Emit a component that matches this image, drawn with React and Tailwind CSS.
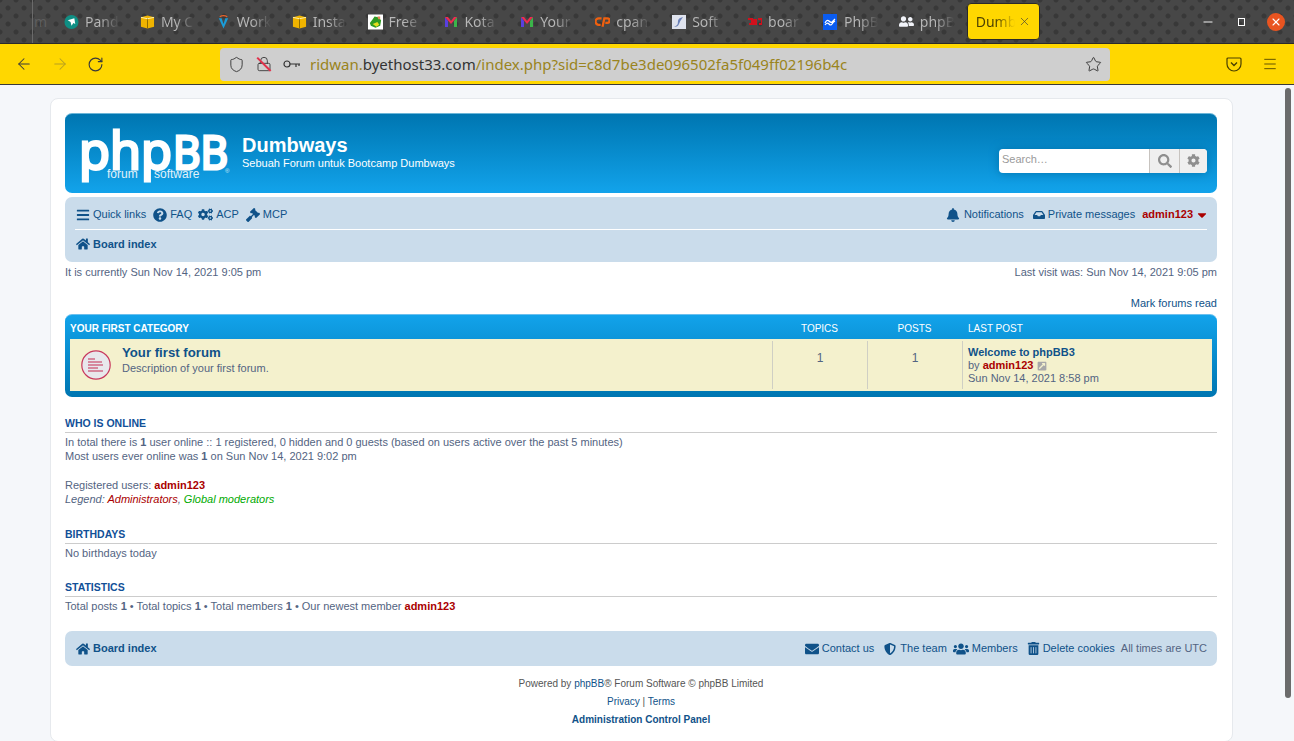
import React from "react";
import {
  FaBars, FaQuestionCircle, FaCogs, FaGavel, FaBell, FaInbox, FaHome, FaEnvelope,
  FaShieldAlt, FaUsers, FaUserFriends, FaTrashAlt, FaSearch, FaCog, FaExternalLinkSquareAlt, FaCaretDown,
} from "react-icons/fa";
import { ArrowLeft, ArrowRight, RotateCw, Star, Menu, Shield, Lock, X, Minus } from "lucide-react";

const Box = () => (
  <svg width="16" height="16" viewBox="0 0 16 16">
    <path d="M1 3l7-2 7 2v10l-7 2-7-2z" fill="#f0b400" />
    <path d="M8 4v11" stroke="#8a6a00" strokeWidth="1" />
    <path d="M1 3l7 1.5L15 3" stroke="#fff2b0" strokeWidth="1" fill="none" />
  </svg>
);

const GMail = () => (
  <svg width="14" height="14" viewBox="0 0 14 14">
    <path d="M1 2v10h3V6z" fill="#5a3fe0" />
    <path d="M13 2v10h-3V6z" fill="#3bb54a" />
    <path d="M1 2l3 0 3 4 3-4 3 0-6 7z" fill="#ee2c50" />
  </svg>
);

const tabs = [
  {
    label: "Pand",
    icon: (
      <svg width="16" height="16" viewBox="0 0 16 16">
        <circle cx="8" cy="8" r="7.5" fill="#0f8f84" />
        <path d="M4 6l7-2 1 6-2-1-2 3-1-4z" fill="#fff" />
      </svg>
    ),
  },
  { label: "My C", icon: <Box /> },
  {
    label: "Work",
    icon: (
      <svg width="16" height="16" viewBox="0 0 16 16">
        <path d="M3 4l5 11 5-11h-3l-2 6-2-6z" fill="#1a9cd8" />
        <path d="M4 2.5q4-2.5 8 0" stroke="#e8642c" strokeWidth="1.2" fill="none" />
      </svg>
    ),
  },
  { label: "Insta", icon: <Box /> },
  {
    label: "Free",
    icon: (
      <svg width="16" height="16" viewBox="0 0 16 16">
        <rect width="16" height="16" fill="#fff" />
        <path d="M2 9l3-4 2-3 4 1 3 3-1 6-5 2-5-2z" fill="#2f9a24" />
        <path d="M5 10l5-2 2 3-3 2z" fill="#e6dc1e" />
        <path d="M10 2h3v3h-2z" fill="#e88a5a" />
      </svg>
    ),
  },
  { label: "Kota", icon: <GMail /> },
  { label: "Your", icon: <GMail /> },
  {
    label: "cpan",
    icon: (
      <svg width="16" height="14" viewBox="0 0 16 14">
        <path d="M7 3H4a3 3 0 000 7h2M8 12l2-9h3a2.5 2.5 0 010 5h-2" stroke="#f0600f" strokeWidth="2.4" fill="none" />
      </svg>
    ),
  },
  {
    label: "Soft",
    icon: (
      <svg width="14" height="14" viewBox="0 0 14 14">
        <rect width="14" height="14" fill="#dfe3ee" />
        <path d="M11 2Q6 3 6 6t-1 4-3 2q4 0 5-3t4-7z" fill="#6a80b8" />
      </svg>
    ),
  },
  {
    label: "boar",
    icon: (
      <svg width="14" height="8" viewBox="0 0 14 8">
        <path d="M0 1h4v5H1M6 1v5h2V1M10 1h4v5h-3" stroke="#d0101c" strokeWidth="2" fill="none" />
      </svg>
    ),
  },
  {
    label: "PhpB",
    icon: (
      <svg width="14" height="16" viewBox="0 0 14 16">
        <rect width="14" height="16" fill="#0a5cf0" />
        <path d="M2 9q2-4 4-2t3 1 3-3M2 11q2-3 4-1t3 0 3-3" stroke="#fff" strokeWidth="1.2" fill="none" />
      </svg>
    ),
  },
  { label: "phpB", icon: <FaUserFriends className="text-[#f2f4fa] text-[15px]" /> },
];

const BrowserChrome = () => (
  <div className="h-[85px] shrink-0 font-['Noto_Sans',sans-serif]">
    <div className="h-[44px] flex items-center bg-[#474747] bg-[radial-gradient(circle,#383838_2px,transparent_3px),radial-gradient(circle,#383838_2px,transparent_3px)] bg-[length:16px_16px] bg-[position:0_0,8px_8px] border-b border-[#2a2a2a]">
      <div className="w-[33px] h-full border-r border-[#6a6a6a]"></div>
      <div className="w-[31px] pl-[1px] flex items-center text-[14px] text-[#5e5e5e]">m</div>
      {tabs.map((tab) => (
        <div key={tab.label} className="w-[75.9px] flex items-center gap-[6px] shrink-0">
          <span className="w-[15px] flex justify-center shrink-0">{tab.icon}</span>
          <span className="w-[38px] overflow-hidden text-[14px] leading-none py-[2px] whitespace-nowrap bg-gradient-to-r from-[#b8b8b8] from-40% to-transparent to-90% bg-clip-text text-transparent">
            {tab.label}
          </span>
        </div>
      ))}
      <div className="w-[73px] h-[37px] ml-[-8px] bg-[#ffd700] rounded-[4px] border border-[#2a2a2a] flex items-center pl-[8px] gap-[1px] shrink-0">
        <span className="w-[39px] text-[14px] leading-none py-[2px] whitespace-nowrap bg-gradient-to-r from-[#4a3f00] from-50% to-transparent bg-clip-text text-transparent">
          Dumb
        </span>
        <X size={13} strokeWidth={1.2} className="text-[#3a3a3a] ml-[2px]" />
      </div>
      <div className="flex-1"></div>
      <div className="flex items-center">
        <Minus size={14} strokeWidth={1.6} className="text-white mr-[23px]" />
        <div className="w-[7px] h-[8px] border border-white mr-[22px]"></div>
        <div className="w-[18px] h-[18px] rounded-full bg-[#e95420] flex items-center justify-center mr-[9px]">
          <X size={12} strokeWidth={2.2} className="text-white" />
        </div>
      </div>
    </div>
    <div className="h-[41px] bg-[#ffd700] border-b border-[#3a3a3a] flex items-center">
      <div className="w-[220px] flex items-center pl-[15px] gap-[18px] text-[#3a3a3a]">
        <ArrowLeft size={18} strokeWidth={1.4} />
        <ArrowRight size={18} strokeWidth={1.4} className="text-[#b7a020]" />
        <RotateCw size={17} strokeWidth={1.6} />
      </div>
      <div className="w-[890px] h-[33px] bg-[#cfcfcf] rounded-[4px] flex items-center pl-[8px] pr-[7px]">
        <Shield size={17} strokeWidth={1.3} className="text-[#333]" />
        <span className="relative ml-[11px]">
          <Lock size={16} strokeWidth={1.3} className="text-[#333]" />
          <span className="absolute left-[7px] top-[-1px] w-[1.5px] h-[19px] bg-[#e0304a] -rotate-45"></span>
        </span>
        <svg width="18" height="10" viewBox="0 0 18 10" className="ml-[11px]">
          <circle cx="4" cy="5" r="3" fill="none" stroke="#333" strokeWidth="1.2" />
          <path d="M7 5h10M13 5v3M16 5v2" stroke="#333" strokeWidth="1.2" fill="none" />
        </svg>
        <span className="ml-[9px] text-[15px] whitespace-nowrap text-[#9a8420]">
          ridwan.<span className="text-[#333]">byethost33.com</span>/index.php?sid=c8d7be3de096502fa5f049ff02196b4c
        </span>
        <div className="flex-1"></div>
        <Star size={17} strokeWidth={1.3} className="text-[#333] mr-[1px]" />
      </div>
      <div className="flex-1 flex items-center text-[#4a4000] pl-[116px] gap-[20px]">
        <svg width="16" height="16" viewBox="0 0 16 16">
          <path d="M2 2h12a1 1 0 011 1v5a7 7 0 01-14 0V3a1 1 0 011-1z" fill="none" stroke="#4a4000" strokeWidth="1.2" />
          <path d="M5 6.5l3 3 3-3" fill="none" stroke="#4a4000" strokeWidth="1.4" />
        </svg>
        <Menu size={16} strokeWidth={1.3} />
      </div>
    </div>
  </div>
);

const NavItem = ({ icon, children, className = "" }) => (
  <span className={`flex items-center gap-[3px] text-[#105289] ${className}`}>
    <span className="text-[14px] text-[#105289]">{icon}</span>
    <span className="text-[11px]">{children}</span>
  </span>
);

const Logo = () => (
  <svg width="152" height="56" viewBox="0 0 152 56" className="shrink-0 overflow-visible" role="img">
    <text x="-1" y="43" fontFamily="'Open Sans', sans-serif" fontSize="52" fill="#fff" stroke="#fff" strokeWidth="3" textLength="93" lengthAdjust="spacingAndGlyphs">
      php
    </text>
    <text x="93" y="43" fontFamily="'Open Sans', sans-serif" fontSize="45" fill="#fff" stroke="#fff" strokeWidth="3" textLength="55" lengthAdjust="spacingAndGlyphs">
      BB
    </text>
    <text x="27" y="52" fontFamily="'Liberation Sans', sans-serif" fontSize="12" fill="#e2f2fa">forum</text>
    <text x="74" y="52" fontFamily="'Liberation Sans', sans-serif" fontSize="12" fill="#e2f2fa">software</text>
    <text x="145" y="47" fontFamily="'Liberation Sans', sans-serif" fontSize="6" fill="#d5ecf8">®</text>
  </svg>
);

const Heading = ({ children }) => (
  <h3 className="text-[10.5px] leading-[14px] font-bold text-[#115098] uppercase border-b border-[#ccc] pb-[2px] mb-[2px]">
    {children}
  </h3>
);

const Admin = () => <span className="font-bold text-[#aa0000]">admin123</span>;

const App = () => {
  return (
    <div className="w-[1294px] h-[741px] overflow-hidden flex flex-col bg-[#f5f7fa] relative font-['Liberation_Sans',Arial,sans-serif] text-[11px] text-[#536482]">
      <BrowserChrome />
      <div className="absolute right-[3px] top-[88px] w-[6px] h-[610px] rounded-full bg-[#6b6b6b]"></div>

      <div className="mt-[13px] ml-[50px] w-[1183px] h-[700px] bg-white border border-[#e6e9ed] rounded-[8px] p-[14px] pr-[15px]">
        <div className="h-[80px] rounded-[7px] border-t border-[#6cb6d8] bg-gradient-to-b from-[#0076b1] to-[#12a3eb] flex items-center pl-[15px] pr-[10px] text-white">
          <Logo />
          <div className="ml-[10px] mb-[5px]">
            <div className="text-[20px] leading-[24px] font-bold">Dumbways</div>
            <div className="text-[11px] leading-[13px]">Sebuah Forum untuk Bootcamp Dumbways</div>
          </div>
          <div className="ml-auto mt-[14px] h-[24px] w-[208px] flex bg-white rounded-[4px] shadow-[0_0_10px_#0075b0] overflow-hidden">
            <span className="flex-1 pl-[3px] text-[11px] leading-[21px] text-[#9a9a9a]">Search…</span>
            <span className="w-[30px] border-l border-[#c7c3bf] bg-[#efefef] flex items-center justify-center text-[#8f8f8f] text-[14px]">
              <FaSearch />
            </span>
            <span className="w-[28px] border-l border-[#c7c3bf] bg-[#efefef] flex items-center justify-center text-[#8f8f8f] text-[13px]">
              <FaCog />
            </span>
          </div>
        </div>

        <div className="mt-[4px] h-[65px] bg-[#cadceb] rounded-[7px] px-[10px]">
          <div className="h-[33px] flex items-center border-b border-white pt-[3px]">
            <NavItem icon={<FaBars />} className="ml-[1px] mr-[7px]">Quick links</NavItem>
            <NavItem icon={<FaQuestionCircle />} className="mr-[6px]">FAQ</NavItem>
            <NavItem icon={<FaCogs className="text-[15px]" />} className="mr-[7px]">ACP</NavItem>
            <NavItem icon={<FaGavel />}>MCP</NavItem>
            <div className="ml-auto flex items-center">
              <NavItem icon={<FaBell className="mr-[1px]" />} className="mr-[9px]">Notifications</NavItem>
              <NavItem icon={<FaInbox className="text-[12px]" />} className="mr-[7px]">Private messages</NavItem>
              <span className="font-bold text-[11px] text-[#aa0000]">admin123</span>
              <FaCaretDown className="text-[#aa0000] text-[14px] ml-[2px] mr-[-2px]" />
            </div>
          </div>
          <div className="h-[28px] flex items-center">
            <NavItem icon={<FaHome />} className="ml-[1px]"><b>Board index</b></NavItem>
          </div>
        </div>

        <div className="mt-[3px] h-[14px] leading-[14px] flex justify-between">
          <span>It is currently Sun Nov 14, 2021 9:05 pm</span>
          <span>Last visit was: Sun Nov 14, 2021 9:05 pm</span>
        </div>
        <div className="mt-[17px] h-[14px] leading-[14px] text-right text-[#105289]">Mark forums read</div>

        <div className="mt-[4px] h-[83px] rounded-[7px] bg-gradient-to-b from-[#12a3eb] to-[#0076b1] px-[5px] border-t border-[#6cc0ee]">
          <div className="h-[24px] pt-[2px] grid grid-cols-[702px_95px_95px_1fr] items-center text-[10px] text-white">
            <span className="font-bold uppercase">Your first category</span>
            <span className="text-center">TOPICS</span>
            <span className="text-center">POSTS</span>
            <span className="pl-[6px]">LAST POST</span>
          </div>
          <div className="h-[52px] bg-[#f4f1cd] grid grid-cols-[702px_95px_95px_1fr] py-[2px]">
            <div className="flex items-center pl-[11px]">
              <svg width="30" height="30" viewBox="0 0 30 30" className="shrink-0">
                <circle cx="15" cy="15" r="14.2" fill="#e8e8ec" stroke="#c8385c" strokeWidth="1.2" />
                <path d="M7 9h7M7 12h14M7 15h15M7 18h10M7 21h15" stroke="#c42a50" strokeWidth="1.2" />
              </svg>
              <div className="ml-[11px] mb-[10px]">
                <div className="text-[13.2px] leading-[15px] font-bold text-[#105289]">Your first forum</div>
                <div className="text-[11px] leading-[14px] mt-[1px]">Description of your first forum.</div>
              </div>
            </div>
            <div className="border-l border-[#cfcfc4] text-center text-[12px] pt-[8px]">1</div>
            <div className="border-l border-[#cfcfc4] text-center text-[12px] pt-[8px]">1</div>
            <div className="border-l border-[#cfcfc4] pl-[5px] pt-[5px] leading-[13px]">
              <div className="font-bold text-[#105289]">Welcome to phpBB3</div>
              <div className="flex items-center gap-[4px]">
                <span>by <Admin /></span>
                <FaExternalLinkSquareAlt className="text-[#a8a8a8] text-[10px]" />
              </div>
              <div>Sun Nov 14, 2021 8:58 pm</div>
            </div>
          </div>
        </div>

        <div className="mt-[19px]">
          <Heading>Who is online</Heading>
          <p className="leading-[14px]">
            In total there is <b>1</b> user online :: 1 registered, 0 hidden and 0 guests (based on users active over the past 5 minutes)
          </p>
          <p className="leading-[14px]">Most users ever online was <b>1</b> on Sun Nov 14, 2021 9:02 pm</p>
          <p className="leading-[14px] mt-[15px]">Registered users: <Admin /></p>
          <p className="leading-[14px] italic">
            Legend: <span className="text-[#aa0000]">Administrators</span>, <span className="text-[#00aa00]">Global moderators</span>
          </p>
        </div>

        <div className="mt-[21px]">
          <Heading>Birthdays</Heading>
          <p className="leading-[14px]">No birthdays today</p>
        </div>

        <div className="mt-[20px]">
          <Heading>Statistics</Heading>
          <p className="leading-[14px]">
            Total posts <b>1</b> • Total topics <b>1</b> • Total members <b>1</b> • Our newest member <Admin />
          </p>
        </div>

        <div className="mt-[18px] h-[35px] bg-[#cadceb] rounded-[7px] px-[10px] flex items-center">
          <NavItem icon={<FaHome />} className="ml-[1px]"><b>Board index</b></NavItem>
          <div className="ml-auto flex items-center">
            <NavItem icon={<FaEnvelope />} className="mr-[10px]">Contact us</NavItem>
            <NavItem icon={<FaShieldAlt className="text-[12px] mr-[1px]" />} className="mr-[6px]">The team</NavItem>
            <NavItem icon={<FaUsers className="text-[16px]" />} className="mr-[9px]">Members</NavItem>
            <NavItem icon={<FaTrashAlt className="text-[13px]" />} className="mr-[6px]">Delete cookies</NavItem>
            <span>All times are UTC</span>
          </div>
        </div>

        <div className="mt-[11px] text-center text-[10px] text-[#555]">
          <p className="leading-[14px]">Powered by <span className="text-[#105289]">phpBB</span>® Forum Software © phpBB Limited</p>
          <p className="leading-[14px] mt-[4px]"><span className="text-[#105289]">Privacy</span> | <span className="text-[#105289]">Terms</span></p>
          <p className="leading-[14px] mt-[4px] font-bold text-[#105289]">Administration Control Panel</p>
        </div>
      </div>
    </div>
  );
};

export default App;
